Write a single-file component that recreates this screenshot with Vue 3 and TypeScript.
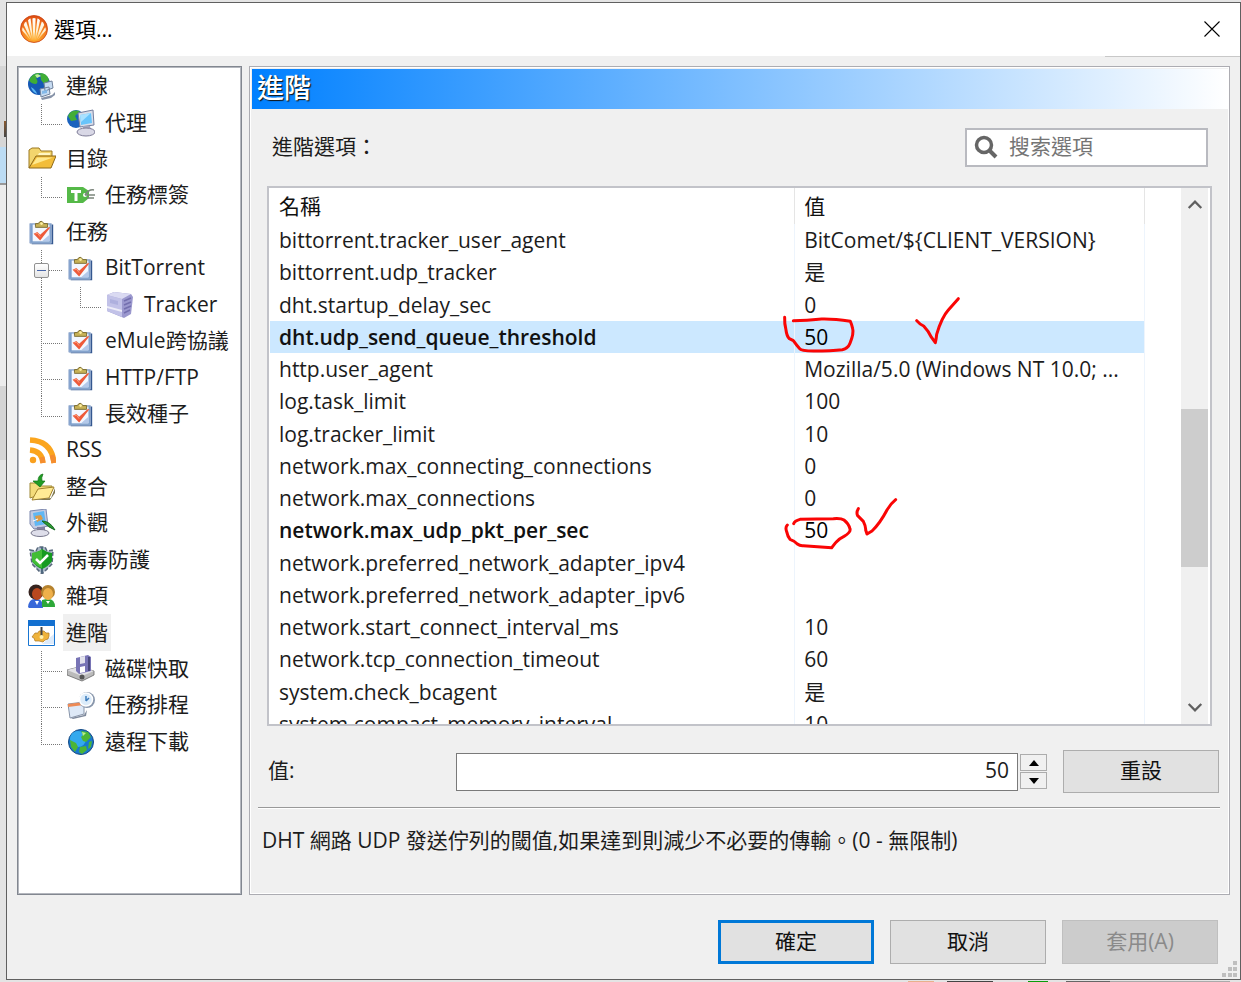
<script setup lang="ts">
import { ref, computed } from 'vue'

type Guide = 'tee' | 'elbow' | 'line' | 'box'
interface TreeNode { label: string; icon: string; guides: Guide[] }
interface Option { name: string; value: string; bold?: boolean; mark?: 'first' | 'second' }

const tree: TreeNode[] = [
  { label: '連線', icon: 'globe-net', guides: [] },
  { label: '代理', icon: 'proxy', guides: ['elbow'] },
  { label: '目錄', icon: 'folder', guides: [] },
  { label: '任務標簽', icon: 'tag', guides: ['elbow'] },
  { label: '任務', icon: 'task', guides: [] },
  { label: 'BitTorrent', icon: 'task', guides: ['box'] },
  { label: 'Tracker', icon: 'server', guides: ['line', 'elbow'] },
  { label: 'eMule跨協議', icon: 'task', guides: ['tee'] },
  { label: 'HTTP/FTP', icon: 'task', guides: ['tee'] },
  { label: '長效種子', icon: 'task', guides: ['elbow'] },
  { label: 'RSS', icon: 'rss', guides: [] },
  { label: '整合', icon: 'integrate', guides: [] },
  { label: '外觀', icon: 'appearance', guides: [] },
  { label: '病毒防護', icon: 'shield', guides: [] },
  { label: '雜項', icon: 'people', guides: [] },
  { label: '進階', icon: 'advanced', guides: [] },
  { label: '磁碟快取', icon: 'disk', guides: ['tee'] },
  { label: '任務排程', icon: 'schedule', guides: ['tee'] },
  { label: '遠程下載', icon: 'earth', guides: ['elbow'] },
]

const options: Option[] = [
  { name: 'bittorrent.tracker_user_agent', value: 'BitComet/${CLIENT_VERSION}' },
  { name: 'bittorrent.udp_tracker', value: '是' },
  { name: 'dht.startup_delay_sec', value: '0' },
  { name: 'dht.udp_send_queue_threshold', value: '50', bold: true, mark: 'first' },
  { name: 'http.user_agent', value: 'Mozilla/5.0 (Windows NT 10.0; ...' },
  { name: 'log.task_limit', value: '100' },
  { name: 'log.tracker_limit', value: '10' },
  { name: 'network.max_connecting_connections', value: '0' },
  { name: 'network.max_connections', value: '0' },
  { name: 'network.max_udp_pkt_per_sec', value: '50', bold: true, mark: 'second' },
  { name: 'network.preferred_network_adapter_ipv4', value: '' },
  { name: 'network.preferred_network_adapter_ipv6', value: '' },
  { name: 'network.start_connect_interval_ms', value: '10' },
  { name: 'network.tcp_connection_timeout', value: '60' },
  { name: 'system.check_bcagent', value: '是' },
  { name: 'system.compact_memory_interval', value: '10' },
]

const page = ref('進階')
const selected = ref('dht.udp_send_queue_threshold')
const query = ref('')
const amount = ref(50)
const rows = computed(() => options.filter(o => o.name.includes(query.value)))
</script>

<template>
  <div class="desktop">
    <main class="dialog">
      <header class="titlebar">
        <svg class="logo" viewBox="0 0 28 28" aria-hidden="true">
          <defs>
            <radialGradient id="comet" cx="50%" cy="80%" r="80%">
              <stop offset="0" stop-color="#ffb52e" /><stop offset=".6" stop-color="#f47d20" /><stop offset="1" stop-color="#dd4a10" />
            </radialGradient>
            <linearGradient id="rays" x1="0" y1="0" x2="0" y2="28" gradientUnits="userSpaceOnUse">
              <stop offset=".1" stop-color="#fff" /><stop offset=".6" stop-color="#ffefd0" /><stop offset=".9" stop-color="#ffb038" />
            </linearGradient>
          </defs>
          <circle cx="14" cy="14" r="13.5" fill="url(#comet)" stroke="#c9400f" stroke-width=".8" />
          <path d="M13.4 25 12.4 3.5Q14 2.6 15.6 3.5L14.6 25ZM12.300 25 8 5.400Q9 3.600 10.600 3.600L13 25ZM15.700 25 20 5.400Q19 3.600 17.400 3.600L15 25ZM11 24.600 3.800 10Q4.400 7.200 6.200 6.400L12 25ZM17 24.600 24.200 10Q23.600 7.200 21.800 6.400L16 25ZM9.400 24 2.200 15.400Q2 13.500 2.800 12.200L10.500 24.600ZM18.600 24 25.800 15.400Q26 13.500 25.200 12.200L17.500 24.600Z" fill="url(#rays)" />
        </svg>
        <h1>選項...</h1>
        <button class="close" type="button" aria-label="Close">
          <svg viewBox="0 0 16 16"><path d="M.5.5l15 15M15.5.5l-15 15" stroke="#000" stroke-width="1.1" /></svg>
        </button>
      </header>

      <div class="columns">
        <nav class="tree">
          <ul>
            <li v-for="n in tree" :key="n.label">
              <span v-for="(g, i) in n.guides" :key="i" class="guide" :class="g">
                <button v-if="g === 'box'" class="expander" type="button" aria-label="Collapse"></button>
              </span>
              <svg class="icon" :viewBox="n.icon === 'task' ? '-1 -2 30 30' : '0 0 28 28'" aria-hidden="true">
                <template v-if="n.icon === 'globe-net'">
                  <circle cx="11" cy="12" r="11" fill="#1559b5" />
                  <path d="M1 8Q5 0 12 1 10 5 8 6 11 10 8 12 3 12 1 8ZM12 1Q19 1 21 8L17 13 13 8Z" fill="#3fae35" />
                  <path d="M3 15Q8 18 9 22Q4 20 3 15Z" fill="#5bb5f2" />
                  <path d="M7 3Q10 1 13 4L9 6Z" fill="#bdf0a0" />
                  <path d="M16 11l8-2 1 7-8 3ZM12 17l9-2 1 7-9 3Z" fill="#c7dcf2" stroke="#71829c" />
                  <path d="M14 19l5-1v3l-5 1Z" fill="#83b9e9" /><path d="M13 26l11-3 3-3v3l-4 3-9 2Z" fill="#8793a8" />
                </template>
                <template v-else-if="n.icon === 'proxy'">
                  <circle cx="9" cy="10" r="9" fill="#1a62be" />
                  <path d="M1 7Q4 0 13 2L8 7 10 11 4 12Z" fill="#43ad37" />
                  <path d="M11 4l15-3 1 15-14 2Z" fill="#d9dde9" stroke="#767f9e" /><path d="M13 6l11-2 1 10-11 2Z" fill="#68c4fb" /><path d="M13 6l11-2-10 9Z" fill="#a9e1ff" />
                  <path d="M16 17h7l1 4h-8Z" fill="#a3a4bb" /><ellipse cx="19" cy="23" rx="9" ry="4" fill="#d9d8e6" stroke="#7d7b96" />
                </template>
                <template v-else-if="n.icon === 'folder'">
                  <path d="M1 23V5l3-2h7l2 3h11v6" fill="#f3d56d" stroke="#9b7922" /><path d="M1 23L8 11h20l-5 12Z" fill="#f2bd3a" stroke="#8c691b" />
                  <path d="M4 20L9 12.500h16Z" fill="#ffe98e" /><path d="M11 8h11v2H10Z" fill="#fff6c4" />
                </template>
                <template v-else-if="n.icon === 'tag'">
                  <path d="M0 6h16l6 4v7l-6 5H0Z" fill="#55b948" /><path d="M4 9h10v3h-3.500v8h-3v-8H4Z" fill="#fff" /><circle cx="18" cy="14" r="2" fill="#fff" />
                  <path d="M18 14Q22 8 27 9M18 14h10M20 17h7" fill="none" stroke="#7b857b" stroke-width="1.500" />
                </template>
                <template v-else-if="n.icon === 'task'">
                  <path d="M2 5h24v21H3Z" fill="#34578f" /><path d="M1 4h23v21H1Z" fill="#7c9fcd" stroke="#9db2d2" /><path d="M4 5h18v18H4Z" fill="#f3f7ff" /><path d="M14 23l8-7v7Z" fill="#b4c9ea" />
                  <path d="M7 7V4h3Q13-1 16 4h4v4H7Z" fill="#c8b257" stroke="#77682b" /><circle cx="13.500" cy="4" r="1.400" fill="#fff2a6" />
                  <path d="M5 15l4-2 3 3L21 8l2 0-11 14Z" fill="#ee5a3a" /><path d="M7 15l2-1 3 4" fill="none" stroke="#ffa17f" />
                </template>
                <template v-else-if="n.icon === 'server'">
                  <path d="M1 4l7-3 17 2 2 3-2 17-7 4L1 20Z" fill="#9b98ce" /><path d="M1 4l15 4v18L1 20Z" fill="#c2c2e8" /><path d="M1 4l7-3 17 2-9 5Z" fill="#dadaf2" />
                  <path d="M1 15l15 4v2L1 17Z" fill="#fff" opacity=".7" /><path d="M18 10l7-3M18 14l7-3M18 18l7-3M18 22l6-3" stroke="#736fae" stroke-width="1.500" /><path d="M4 8l8 2v4l-8-2Z" fill="#aeb0de" />
                </template>
                <template v-else-if="n.icon === 'rss'">
                  <circle cx="5" cy="24" r="3.200" fill="#f9a01f" /><path d="M2 14Q14 15 15 27M2 4Q24 5 26 27" fill="none" stroke="#fba51d" stroke-width="5.500" /><path d="M14 21l1 6M24 19l2 8" stroke="#f58d2f" stroke-width="5" />
                </template>
                <template v-else-if="n.icon === 'integrate'">
                  <path d="M2 25V10h7l2 3h13v5Z" fill="#f4dc7b" stroke="#9e8836" /><path d="M5 25l5-9 16-2-5 11-17 2Z" fill="#ffeb95" stroke="#a2822c" /><path d="M6 27l17-2 4-10v5l-5 7Z" fill="#7e7750" />
                  <path d="M15 1Q10 2 10 8H5l7 6 5-6h-3Q13 5 15 1Z" fill="#219c24" stroke="#107414" stroke-width=".7" />
                </template>
                <template v-else-if="n.icon === 'appearance'">
                  <path d="M2 2l16-2 2 17-14 3L2 15Z" fill="#c3cbe2" stroke="#7d88ae" /><path d="M5 4l11-2 2 13-11 2Z" fill="#60b7f4" /><path d="M7 7l6-1 2 4-6 3Z" fill="#dc9a46" />
                  <path d="M9 18h8v4H9Z" fill="#8081a1" /><ellipse cx="12" cy="24" rx="9" ry="3.500" fill="#dedeea" stroke="#77778c" /><path d="M14 12Q22 12 27 21Q21 19 14 12Z" fill="#2d9b33" stroke="#176a22" /><path d="M5 12l5-2" stroke="#fff" />
                </template>
                <template v-else-if="n.icon === 'shield'">
                  <path d="M2 4l6 1 2-4 7 0 2 4 6-1-1 14-10 10-10-10Z" fill="#aab8c6" stroke="#56677b" stroke-width="1.500" stroke-dasharray="4 2" /><path d="M4 10h20M14 1v26" stroke="#4e6880" stroke-width="2" />
                  <path d="M4 7Q11 6 14 3Q18 6 24 7V15Q21 20 14 23Q7 20 4 15Z" fill="#159a20" /><path d="M4 7Q11 6 14 3V22Q7 19 4 15Z" fill="#42bd36" /><path d="M8 13l4 4 8-8" fill="none" stroke="#fff" stroke-width="2.500" />
                </template>
                <template v-else-if="n.icon === 'people'">
                  <path d="M0 25Q1 16 8 17Q15 16 15 26H1Z" fill="#3868d9" /><path d="M14 25V18Q27 14 27 25Z" fill="#2da839" /><circle cx="8" cy="10" r="7.500" fill="#36231e" /><ellipse cx="9" cy="12" rx="5" ry="6" fill="#b9481f" />
                  <circle cx="20" cy="10" r="7" fill="#b5822e" /><ellipse cx="20" cy="12" rx="5" ry="6" fill="#efb04a" /><path d="M7 19l2 4 2-4M18 19l2 3 2-3" fill="#fff" />
                </template>
                <template v-else-if="n.icon === 'advanced'">
                  <path d="M.5 2.500h26v24H.5Z" fill="#fff" stroke="#1976d2" /><path d="M0 1h27v6H0Z" fill="#1370d0" /><path d="M14 25l12-10v10Z" fill="#dceafa" />
                  <path d="M7 14l3 0 1-2h5l2 2 3 0v3l-1 3-3 1-2 2-4-1-4 0-1-3-2-1Z" fill="#efb33b" stroke="#ad7924" stroke-width=".7" /><path d="M13.500 8v9" stroke="#444" stroke-width="2" /><circle cx="13.500" cy="18" r="2" fill="#fff0ad" />
                </template>
                <template v-else-if="n.icon === 'disk'">
                  <path d="M0 15l12-3 15 4v4l-12 6L0 20Z" fill="#bbb" stroke="#666" stroke-width=".8" /><path d="M0 15l12-3 15 4-12 5Z" fill="#e3e3e7" /><circle cx="15" cy="22" r="2.500" fill="#555" />
                  <path d="M9 3l12-3 3 2v14l-12 3-3-3Z" fill="#7874b5" /><path d="M13 2l5-1v7l-5 1Z" fill="#e2e2ec" /><path d="M13 12l5-1v6l-5 1Z" fill="#fff" /><path d="M22 2v14" stroke="#49487c" stroke-width="2" />
                </template>
                <template v-else-if="n.icon === 'schedule'">
                  <path d="M1 13l16-2v12L3 27Z" fill="#dee9f7" stroke="#8794a9" /><path d="M1 13l16-2v3L1 16Z" fill="#ed8a55" /><path d="M4 27l13-3 3-5-1 6-13 3Z" fill="#7e899c" />
                  <circle cx="20" cy="9" r="8" fill="#8997ac" /><circle cx="19" cy="8.500" r="6.500" fill="#dcecfa" stroke="#fff" stroke-width="1.500" /><path d="M19 10V5M19 10l3-3" fill="none" stroke="#3d7cbc" stroke-width="1.500" />
                </template>
                <template v-else>
                  <circle cx="14" cy="14" r="12.500" fill="#1879cf" stroke="#154a83" /><circle cx="11" cy="11" r="8" fill="#33a9ee" />
                  <path d="M14 3l7 1 3 5-5 5-3-1-2-4 2-2ZM3 12l6 3 2 4-3 5-4-5ZM13 19l6-1 1 4-5 4-3-2ZM22 14l3-1-1 6-3 2Z" fill="#4cb536" /><path d="M15 4l4 1-3 3Z" fill="#baf08c" />
                </template>
              </svg>
              <button class="label" type="button" :class="{ current: n.label === page }" @click="page = n.label">{{ n.label }}</button>
            </li>
          </ul>
        </nav>

        <section class="panel">
          <h2>進階</h2>
          <div class="content">
            <div class="toolbar">
              <label for="find">進階選項：</label>
              <div class="search">
                <svg viewBox="0 0 26 26" aria-hidden="true"><circle cx="10" cy="10" r="7.500" fill="none" stroke="#666" stroke-width="3.500" /><path d="M15 15l7 7" stroke="#666" stroke-width="4" /></svg>
                <input id="find" v-model="query" type="text" placeholder="搜索選項">
              </div>
            </div>

            <div class="list">
              <div class="viewport">
                <table>
                  <thead><tr><th class="name">名稱</th><th class="value">值</th><th class="rest"></th></tr></thead>
                  <tbody>
                    <tr v-for="o in rows" :key="o.name" :class="{ selected: o.name === selected, bold: o.bold }" @click="selected = o.name">
                      <td>{{ o.name }}</td>
                      <td>
                        {{ o.value }}
                        <svg v-if="o.mark === 'first'" class="ink first" viewBox="0 39 600 180" aria-hidden="true">
                          <path d="M44 112Q43 130 48 150Q50 168 58 176L70 182Q80 196 88 205Q94 213 130 213Q185 213 217 209Q234 206 240 190Q252 160 248 146Q245 132 241 124Q190 116 155 117Q110 122 70 122M440 122Q448 132 461 138Q476 154 483 170L496 188Q499 175 500 163Q515 112 535 90L565 56" />
                        </svg>
                        <svg v-else-if="o.mark === 'second'" class="ink second" viewBox="0 630 420 210" aria-hidden="true">
                          <path d="M52 735Q45 742 50 755Q53 770 60 778Q74 783 82 792Q90 798 100 797L185 803Q190 797 197 788Q205 777 222 769Q243 757 240 747Q237 732 222 720Q213 714 190 716L90 718Q74 722 71 731M265 686Q258 698 263 707L280 724Q288 740 287 750L291 762L306 753Q330 730 351 690Q363 670 377 659" />
                        </svg>
                      </td>
                      <td></td>
                    </tr>
                  </tbody>
                </table>
              </div>
              <div class="scrollbar">
                <button type="button" aria-label="Scroll up"><svg viewBox="0 0 14 10"><path d="M1.500 8.500L7 3l5.500 5.500" /></svg></button>
                <div class="track"><div class="thumb"></div></div>
                <button type="button" aria-label="Scroll down"><svg viewBox="0 0 14 10"><path d="M1.500 1.500L7 7l5.500-5.500" /></svg></button>
              </div>
            </div>

            <div class="editor">
              <label for="amount">值:</label>
              <input id="amount" v-model.number="amount" type="number">
              <div class="spin">
                <button type="button" aria-label="Increase" @click="amount++"><svg viewBox="0 0 10 6"><path d="M0 6L5 0l5 6Z" /></svg></button>
                <button type="button" aria-label="Decrease" @click="amount--"><svg viewBox="0 0 10 6"><path d="M0 0l5 6 5-6Z" /></svg></button>
              </div>
              <button class="push reset" type="button" @click="amount = 50">重設</button>
            </div>
            <hr>
            <p>DHT 網路 UDP 發送佇列的閾值,如果達到則減少不必要的傳輸。(0 - 無限制)</p>
          </div>
        </section>
      </div>

      <footer>
        <button class="push ok" type="button">確定</button>
        <button class="push" type="button">取消</button>
        <button class="push" type="button" disabled>套用(A)</button>
      </footer>
      <svg class="grip" viewBox="0 0 16 16" aria-hidden="true"><path d="M11 0h4v4h-4ZM6 6h4v4H6ZM11 6h4v4h-4ZM0 12h4v4H0ZM6 12h4v4H6ZM11 12h4v4h-4Z" fill="#bfbfbf" /></svg>
    </main>
  </div>
</template>

<style>
body { margin: 0; background: #e4e4e4; }
</style>

<style scoped>
* { box-sizing: border-box; }
.desktop {
  min-height: 100vh;
  display: flex;
  padding: 2px 0 2px 6px;
  background:
    linear-gradient(90deg, transparent 908px, #e9b08c 908px 934px, transparent 934px 947px, #444 947px 993px, transparent 993px 1028px, #0a9d0a 1028px 1048px, transparent 1048px 1066px, #666 1066px 1110px, #aaa 1110px 1230px, transparent 1230px) left bottom / 100% 1px no-repeat,
    linear-gradient(#8a5a30, #444) 4px 121px / 2px 16px no-repeat,
    linear-gradient(#e4e4e4 66px, #d6d6d6 66px, #d6d6d6 147px, #bcdcf4 147px, #bcdcf4 183px, #999 183px, #999 185px, #ececec 185px, #ececec 386px, #d5d5d5 386px, #d5d5d5 460px, #e4e4e4 460px);
  color: #1c1c1c;
  font: 21px/32px "Open Sans", "Noto Sans CJK TC", sans-serif;
}
button, input { font: inherit; color: inherit; padding: 0; border: 0; background: none; border-radius: 0; }
.dialog { position: relative; flex: 1; min-width: 0; display: flex; flex-direction: column; background: #f0f0f0; border: 1px solid #606060; }
.titlebar { height: 53px; display: flex; align-items: center; padding: 0 20px 2px 13px; background: #fff; }
.logo { width: 28px; height: 28px; margin-right: 6px; }
h1 { flex: 1; margin: 0; font-size: 21px; font-weight: 400; color: #000; }
.close { width: 16px; height: 16px; display: flex; }
.close svg { width: 16px; height: 16px; }

.columns { flex: 1; display: flex; gap: 7px; padding: 10px 10px 0; background: linear-gradient(#c8c8c8, #c8c8c8) right top / 135px 1px no-repeat; }
.tree { width: 225px; flex: none; background: #fff; border: 1px solid #828790; box-shadow: inset 0 0 0 1px #b4b7be; }
.tree ul { list-style: none; margin: 0; padding: 1px 0 0 10px; height: 693px; display: grid; grid-auto-rows: 1fr; }
.tree li { display: flex; align-items: center; white-space: nowrap; }
.icon { width: 28px; height: 28px; margin-right: 7px; flex: none; }
.label { height: 100%; padding: 0 3px 2px; }
.label.current { background: #f0f0f0; }
.guide {
  --v: repeating-linear-gradient(#777 0 1px, transparent 1px 2px);
  --h: repeating-linear-gradient(90deg, #777 0 1px, transparent 1px 2px);
  width: 39px; height: 100%; flex: none; background-repeat: no-repeat;
}
.line { background-image: var(--v); background-size: 1px 100%; background-position: 13px 0; }
.tee, .box { background-image: var(--v), var(--h); background-size: 1px 100%, 21px 1px; background-position: 13px 0, 13px 20px; }
.elbow { background-image: var(--v), var(--h); background-size: 1px 21px, 21px 1px; background-position: 13px 0, 13px 20px; }
.expander {
  display: block; width: 15px; height: 15px; margin: 13px 0 0 6px; border: 1px solid #919191; border-radius: 2px;
  background: linear-gradient(#4664a8, #4664a8) center / 9px 1px no-repeat, linear-gradient(#fff, #e4e4e4);
}

.panel { flex: 1; min-width: 0; display: flex; flex-direction: column; border: 1px solid #acacb2; box-shadow: inset 0 0 0 1px #fff; padding: 2px 1px 1px 2px; }
h2 { margin: 0; height: 40px; padding-left: 5px; font-size: 27px; line-height: 38px; font-weight: 500; color: #fff; text-shadow: 1px 1px 1px #111; background: linear-gradient(90deg, #0080ff, #fff); }
.content { flex: 1; display: flex; flex-direction: column; padding: 19px 17px 0 15px; }
.toolbar { display: flex; align-items: center; justify-content: space-between; margin: 0 3px 19px 5px; }
.toolbar label, .editor label { padding-bottom: 3px; }
.search { width: 243px; height: 39px; display: flex; align-items: center; background: #fff; border: 2px solid #b9bac0; padding-left: 7px; }
.search svg { width: 26px; height: 26px; margin-right: 9px; }
.search input { flex: 1; min-width: 0; height: 33px; padding-bottom: 3px; outline: 0; }
.search input::placeholder { color: #757575; opacity: 1; }

.list { height: 540px; display: flex; margin-right: -1px; border: 2px solid #c2c3c9; background: #fff; padding-right: 2px; }
.viewport { flex: 1; min-width: 0; overflow: hidden; padding: 0 0 0 1px; }
table { width: 100%; table-layout: fixed; border-collapse: collapse; white-space: nowrap; }
th, td { padding: 0 0 0 9px; line-height: 30px; }
th { height: 36px; text-align: left; font-weight: 400; color: #111; border-right: 1px solid #e5e5e5; }
.name { width: 57.6%; }
.value { width: 38.4%; }
th.rest, td:last-child { border: 0; }
td { height: 32px; border-right: 1px solid #edf4fc; }
tr:nth-child(4n + 3) td { height: 33px; }
td:nth-child(2) { position: relative; }
.selected td:not(:last-child) { background: #cce8ff; }
.bold td:first-child { font-weight: 600; color: #111; }
.bold td:nth-child(2) { font-weight: 500; color: #000; }
.ink { position: absolute; left: -25px; z-index: 1; fill: none; stroke: #fa0505; stroke-width: 9px; stroke-linecap: round; stroke-linejoin: round; pointer-events: none; }
.first { top: -28px; width: 200px; height: 60px; }
.second { top: -24px; width: 140px; height: 70px; }
.scrollbar { width: 27px; display: flex; flex-direction: column; background: #f0f0f0; }
.scrollbar button { height: 32px; display: grid; place-items: center; }
.scrollbar svg { width: 16px; height: 12px; fill: none; stroke: #606060; stroke-width: 2px; }
.track { flex: 1; display: flex; flex-direction: column; }
.track::before { content: ""; flex: 189; }
.thumb { flex: 158; background: #cdcdcd; }
.track::after { content: ""; flex: 125; }

.editor { display: flex; align-items: center; margin: 24px -8px 0 1px; }
.editor label { width: 188px; }
.editor input { flex: 1; min-width: 0; height: 38px; padding: 0 8px 3px 0; text-align: right; background: #fff; border: 1px solid #7a7a7a; appearance: textfield; }
.editor input::-webkit-inner-spin-button { display: none; }
.spin { width: 27px; margin: 0 16px 0 2px; display: flex; flex-direction: column; gap: 1px; }
.spin button { height: 17px; display: grid; place-items: center; background: #f0f0f0; border: 1px solid #acacac; }
.spin svg { width: 10px; height: 6px; }
.push { width: 156px; height: 44px; padding-bottom: 3px; background: #e1e1e1; border: 1px solid #adadad; color: #111; }
.reset { height: 43px; }
hr { width: auto; margin: 14px -9px 0; border: 0; border-top: 1px solid #999; border-bottom: 1px solid #fff; }
p { margin: 15px -5px 30px; white-space: nowrap; }
footer { display: flex; justify-content: flex-end; gap: 16px; padding: 25px 22px 15px; }
.push.ok { border: 3px solid #0078d7; }
.push:disabled { background: #ccc; border-color: #bfbfbf; color: #8a8a8a; }
.grip { position: absolute; right: 2px; bottom: 2px; width: 16px; height: 16px; }
</style>
